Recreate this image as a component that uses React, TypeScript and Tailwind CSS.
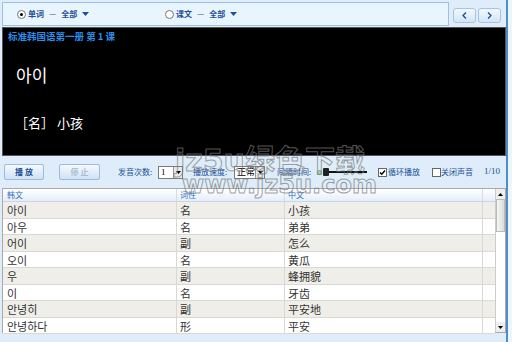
import React from "react";

const rows = [
  ["아이", "名", "小孩"],
  ["아우", "名", "弟弟"],
  ["어이", "副", "怎么"],
  ["오이", "名", "黄瓜"],
  ["우", "副", "蜂拥貌"],
  ["이", "名", "牙齿"],
  ["안녕히", "副", "平安地"],
  ["안녕하다", "形", "平安"],
];

const cjk = { fontFamily: '"Noto Sans CJK SC", "Noto Sans CJK KR", sans-serif' };

function Caret() {
  return (
    <svg width="7" height="4" viewBox="0 0 7 4" className="inline-block ml-[5px]">
      <path d="M0 0h7L3.5 4z" fill="#1d4f9a" />
    </svg>
  );
}

function Radio({ on }: { on?: boolean }) {
  return (
    <span className="inline-flex shrink-0 items-center justify-center w-[9px] h-[9px] rounded-full border border-[#777] bg-white mr-[2px]">
      {on && <span className="w-[3px] h-[3px] rounded-full bg-black" />}
    </span>
  );
}

function Check({ on }: { on?: boolean }) {
  return (
    <span className="inline-flex shrink-0 items-center justify-center w-[9px] h-[9px] border border-[#666] bg-white">
      {on && (
        <svg width="7" height="7" viewBox="0 0 7 7">
          <path d="M1 3.5l1.8 1.8L6 1.5" stroke="#000" strokeWidth="1.4" fill="none" />
        </svg>
      )}
    </span>
  );
}

function SelBox({ w, v }: { w: string; v: string }) {
  return (
    <div className={`flex shrink-0 items-center h-[13px] border border-[#7a7a7a] bg-white ${w}`}>
      <span className="flex-1 pl-[2px] text-[9px] leading-none text-black whitespace-nowrap" style={{ fontFamily: '"Liberation Serif", "Noto Sans CJK SC", serif' }}>{v}</span>
      <span className="w-[9px] h-[11px] border-l border-[#999] bg-[#e8e8e8] flex items-center justify-center">
        <svg width="5" height="3" viewBox="0 0 5 3"><path d="M0 0h5L2.5 3z" fill="#000" /></svg>
      </span>
    </div>
  );
}

export default function App() {
  return (
    <div className="relative w-[512px] h-[342px] overflow-hidden bg-[#deedf9]" style={cjk}>
      <div className="absolute right-0 top-0 w-[6px] h-full bg-[#eef6fd] border-l-2 border-[#4d8fcc]" />
      <div className="w-[506px] h-full flex flex-col pl-[2px]">
        {/* top bar */}
        <div className="flex items-start h-[27px] pt-[2px]">
          <div className="w-[447px] h-[24px] border border-[#9cc2e6] bg-[#e9f5fd] flex items-center text-[8px] font-bold text-[#1d4f9a] whitespace-nowrap">
            <div className="flex items-center pl-[14px] w-[162px]">
              <Radio on />单词<span className="mx-[5px] font-normal">—</span>全部<Caret />
            </div>
            <div className="flex items-center">
              <Radio />课文<span className="mx-[5px] font-normal">—</span>全部<Caret />
            </div>
          </div>
          <div className="flex gap-[2px] ml-[4px] mt-[6px]">
            <div className="w-[23px] h-[15px] rounded-[3px] border border-[#a7c4e2] bg-gradient-to-b from-[#f2f8fd] to-[#d3e6f6] flex items-center justify-center">
              <svg width="5" height="7" viewBox="0 0 5 7"><path d="M4 0.5L1 3.5L4 6.5" stroke="#1d4f9a" strokeWidth="1.3" fill="none" /></svg>
            </div>
            <div className="w-[23px] h-[15px] rounded-[3px] border border-[#a7c4e2] bg-gradient-to-b from-[#f2f8fd] to-[#d3e6f6] flex items-center justify-center">
              <svg width="5" height="7" viewBox="0 0 5 7"><path d="M1 0.5L4 3.5L1 6.5" stroke="#1d4f9a" strokeWidth="1.3" fill="none" /></svg>
            </div>
          </div>
        </div>
        {/* black display */}
        <div className="h-[129px] bg-black border border-[#555] flex flex-col pl-[5px]">
          <div className="text-[9.5px] font-bold text-[#2a8ee8] mt-[4px] leading-none whitespace-nowrap">标准韩国语第一册 第 1 课</div>
          <div className="text-[17px] text-white mt-[24px] ml-[8px] leading-none">아이</div>
          <div className="text-[13px] text-white mt-[33px] ml-[7px] leading-none">［名］ 小孩</div>
        </div>
        {/* controls */}
        <div className="h-[32px] flex items-center text-[8px] text-[#1d4f9a] whitespace-nowrap">
          <div className="shrink-0 w-[40px] h-[16px] ml-[2px] rounded-[2px] border border-[#9dbbdb] bg-gradient-to-b from-[#f5f9fd] to-[#cfe2f4] flex items-center justify-center font-bold text-[#1d4f9a] text-[8px]">播 放</div>
          <div className="shrink-0 w-[41px] h-[16px] ml-[15px] rounded-[2px] border border-[#9dbbdb] bg-gradient-to-b from-[#f5f9fd] to-[#cfe2f4] flex items-center justify-center font-bold text-[#a8bcd3] text-[8px]">停 止</div>
          <span className="shrink-0 ml-[18px] w-[35px]">发音次数:</span>
          <div className="ml-[5px]"><SelBox w="w-[25px]" v="1" /></div>
          <span className="shrink-0 ml-[10px] w-[35px]">播放速度:</span>
          <div className="ml-[6px]"><SelBox w="w-[31px]" v="正常" /></div>
          <span className="shrink-0 ml-[12px] w-[35px]">间隔时间:</span>
          <div className="shrink-0 ml-[5px] flex items-center w-[50px]">
            <span className="w-[5px] h-[5px] rounded-full bg-[#a8d88a] border border-[#6a9] mr-[1px]" />
            <span className="w-[6px] h-[8px] bg-[#222] rounded-[1px]" />
            <span className="flex-1 h-[2px] bg-[#111]" />
          </div>
          <span className="shrink-0 ml-[11px] flex items-center gap-[1px]"><Check on /><span className="w-[32px]">循环播放</span></span>
          <span className="shrink-0 ml-[12px] flex items-center"><Check /><span className="w-[32px]">关闭声音</span></span>
          <span className="shrink-0 ml-[11px] text-[9px]" style={{ fontFamily: '"Liberation Serif", serif' }}>1/10</span>
        </div>
        {/* table */}
        <div className="relative h-[145px] border border-[#a9a9a9] bg-white flex">
          <div className="flex-1 flex flex-col">
            <div className="h-[13px] flex text-[8px] text-[#2d6fc4] bg-gradient-to-b from-white to-[#e4eef8] border-b border-[#c9d6e4]">
              <div className="w-[173px] pl-[4px] leading-[12px]">韩文</div>
              <div className="w-[108px] pl-[3px] leading-[12px] border-l border-[#d5dde6]">词性</div>
              <div className="w-[198px] pl-[3px] leading-[12px] border-l border-[#d5dde6]">中文</div>
              <div className="flex-1 border-l border-[#d5dde6]" />
            </div>
            {rows.map((r, i) => (
              <div key={i} className={`h-[16.5px] flex text-[11px] text-[#333] border-b border-[#d9d9d3] ${i % 2 === 0 ? "bg-[#efeee8]" : "bg-white"}`}>
                <div className="w-[173px] pl-[4px] leading-[16px]">{r[0]}</div>
                <div className="w-[108px] pl-[3px] leading-[16px] border-l border-[#d9d9d3]">{r[1]}</div>
                <div className="w-[198px] pl-[3px] leading-[16px] border-l border-[#d9d9d3]">{r[2]}</div>
                <div className="flex-1 border-l border-[#d9d9d3]" />
              </div>
            ))}
          </div>
          <div className="w-[10px] flex flex-col border-l border-[#ccc] bg-[#f4f4f4]">
            <div className="h-[10px] flex items-center justify-center bg-[#eee]">
              <svg width="5" height="3" viewBox="0 0 5 3"><path d="M0 3h5L2.5 0z" fill="#000" /></svg>
            </div>
            <div className="h-[33px] border border-[#bbb] bg-gradient-to-r from-[#f6f6f6] to-[#dcdcdc]" />
            <div className="flex-1 bg-white" />
            <div className="h-[10px] flex items-center justify-center bg-[#eee]">
              <svg width="5" height="3" viewBox="0 0 5 3"><path d="M0 0h5L2.5 3z" fill="#000" /></svg>
            </div>
          </div>
        </div>
      </div>
      {/* watermark */}
      <div className="absolute left-[175px] top-[146px] pointer-events-none text-[30px] font-bold leading-none text-transparent [-webkit-text-stroke:1px_rgba(120,120,120,0.7)] whitespace-nowrap" style={{ fontFamily: '"DejaVu Sans", "Noto Sans CJK SC", sans-serif' }}>
        jz5u绿色下载
      </div>
      <div className="absolute left-[182px] top-[173px] pointer-events-none text-[24px] font-bold leading-none text-transparent [-webkit-text-stroke:1px_rgba(120,120,120,0.7)] whitespace-nowrap" style={{ fontFamily: '"DejaVu Sans", sans-serif' }}>
        www.jz5u.com
      </div>
    </div>
  );
}
